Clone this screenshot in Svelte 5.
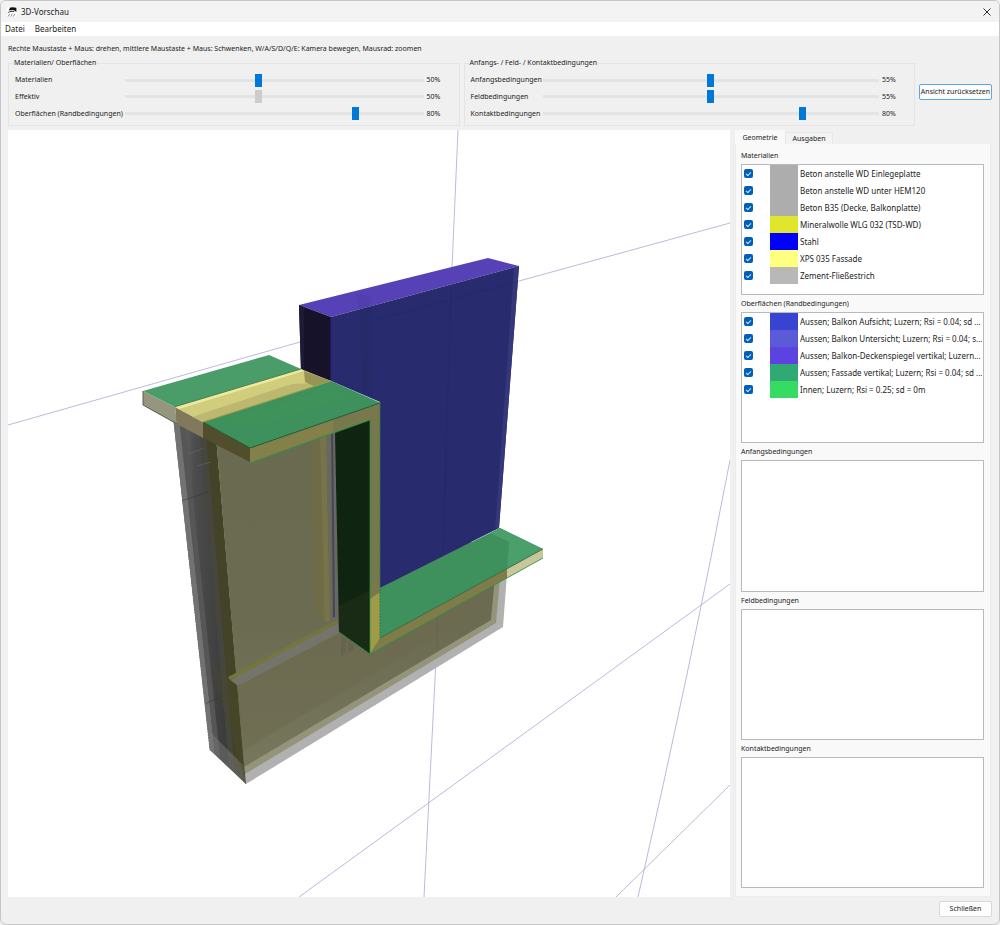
<script lang="ts">
    type Slider = { label: string; value: number; disabled?: boolean }
    type Item = { label: string; color: string; checked: boolean }

    let surfaceSliders: Slider[] = $state([
        { label: "Materialien", value: 50 },
        { label: "Effektiv", value: 50, disabled: true },
        { label: "Oberflächen (Randbedingungen)", value: 80 },
    ])

    let conditionSliders: Slider[] = $state([
        { label: "Anfangsbedingungen", value: 55 },
        { label: "Feldbedingungen", value: 55 },
        { label: "Kontaktbedingungen", value: 80 },
    ])

    let lists: { title: string; items: Item[] }[] = $state([
        {
            title: "Materialien",
            items: [
                { label: "Beton anstelle WD Einlegeplatte", color: "#adadad", checked: true },
                { label: "Beton anstelle WD unter HEM120", color: "#adadad", checked: true },
                { label: "Beton B35 (Decke, Balkonplatte)", color: "#adadad", checked: true },
                { label: "Mineralwolle WLG 032 (TSD-WD)", color: "#dfe62b", checked: true },
                { label: "Stahl", color: "#0000ff", checked: true },
                { label: "XPS 035 Fassade", color: "#ffff80", checked: true },
                { label: "Zement-Fließestrich", color: "#b8b8b8", checked: true },
            ],
        },
        {
            title: "Oberflächen (Randbedingungen)",
            items: [
                { label: "Aussen; Balkon Aufsicht; Luzern; Rsi = 0.04; sd ...", color: "#3644d1", checked: true },
                { label: "Aussen; Balkon Untersicht; Luzern; Rsi = 0.04; s...", color: "#5b5bd9", checked: true },
                { label: "Aussen; Balkon-Deckenspiegel vertikal; Luzern...", color: "#5d42e2", checked: true },
                { label: "Aussen; Fassade vertikal; Luzern; Rsi = 0.04; sd ...", color: "#31a972", checked: true },
                { label: "Innen; Luzern; Rsi = 0.25; sd = 0m", color: "#36db64", checked: true },
            ],
        },
        { title: "Anfangsbedingungen", items: [] },
        { title: "Feldbedingungen", items: [] },
        { title: "Kontaktbedingungen", items: [] },
    ])

    let tab = $state("Geometrie")

    function resetView() {
        surfaceSliders[0].value = 50
        surfaceSliders[2].value = 80
        conditionSliders[0].value = 55
        conditionSliders[1].value = 55
        conditionSliders[2].value = 80
    }
</script>

{#snippet sliderGroup(title: string, sliders: Slider[], wide: boolean)}
    <fieldset class="group">
        <legend>{title}</legend>
        <div class="sliders" class:wide>
            {#each sliders as slider}
                <label>
                    <span>{slider.label}</span>
                    <input type="range" min="10" max="100" bind:value={slider.value} disabled={slider.disabled} />
                    <span>{slider.value}%</span>
                </label>
            {/each}
        </div>
    </fieldset>
{/snippet}

<div class="window">
    <header class="titlebar">
        <svg class="app-icon" viewBox="0 0 10 10" aria-hidden="true">
            <rect width="10" height="10" fill="#fff" />
            <path d="M1.6 3.6 3.2.6Q6-.3 9.4.8V5Q7.6 2.9 5 3 3 3 1.6 3.6Z" fill="#111" />
            <path d="M.2 6.6Q1.4 4.2 4 3.8 6 3.6 8 4.6L6.5 5Q3 4.4.2 6.6Z" fill="#333" />
            <path d="M1 9.6l1.8-2.8M3.6 9.6l1.8-2.8M6.2 9.6 8 6.8" fill="none" stroke="#555" stroke-width=".7" />
        </svg>
        <h1>3D-Vorschau</h1>
        <button class="close" aria-label="Fenster schließen">
            <svg viewBox="0 0 8 8"><path d="M.5.5l7 7M7.5.5l-7 7" fill="none" stroke="#333" /></svg>
        </button>
    </header>

    <nav class="menu">
        <button>Datei</button>
        <button>Bearbeiten</button>
    </nav>

    <p class="hint">
        Rechte Maustaste + Maus: drehen, mittlere Maustaste + Maus: Schwenken, W/A/S/D/Q/E: Kamera bewegen, Mausrad: zoomen
    </p>

    <div class="controls">
        {@render sliderGroup("Materialien/ Oberflächen", surfaceSliders, true)}
        {@render sliderGroup("Anfangs- / Feld- / Kontaktbedingungen", conditionSliders, false)}
        <button class="btn reset" onclick={resetView}>Ansicht zurücksetzen</button>
    </div>

    <main>
        <div class="viewport">
            <svg viewBox="8 130 722 767" preserveAspectRatio="xMidYMid slice" role="img" aria-label="3D-Modell">
                <defs>
                    <linearGradient id="side" x1="0" x2="1" y1="0" y2="0">
                        <stop offset="0" stop-color="#777" />
                        <stop offset=".3" stop-color="#4c4c4c" />
                        <stop offset=".7" stop-color="#3c3c3c" />
                        <stop offset="1" stop-color="#444438" />
                    </linearGradient>
                    <linearGradient id="front" x1="0" x2="0" y1="0" y2="1">
                        <stop offset="0" stop-color="#6a6a50" />
                        <stop offset=".6" stop-color="#6b6b51" />
                        <stop offset="1" stop-color="#76775c" />
                    </linearGradient>
                    <linearGradient id="column" x1="0" x2="1" y1="0" y2="0">
                        <stop offset="0" stop-color="#6b6b4e" />
                        <stop offset=".6" stop-color="#6d6c45" />
                        <stop offset="1" stop-color="#77744c" />
                    </linearGradient>
                </defs>

                <!-- ground grid -->
                <g stroke="#a9a8d0" stroke-width=".8" fill="none">
                    <path d="M458 130 452 268M438 620 424 897" />
                    <path d="M8 425 300 342M519 281 730 223" />
                    <path d="M730 460Q690 670 638 897" />
                    <path d="M299 897 730 584M616 897 730 785" />
                </g>

                <!-- wall, left side -->
                <path d="M173 416 210 750 246 784 217 436Z" fill="url(#side)" />
                <path d="M173 416 210 750 215 754 179 416Z" fill="#727272" />
                <path d="M179 418 215 754 220 758 185 420Z" fill="#565656" />
                <path d="M199 428 229 766 235 772 206 432Z" fill="#46463e" />
                <path d="M206 432 235 772 246 784 217 436Z" fill="#434328" />
                <path d="M210 750 246 784 243 765 208 730Z" fill="#777" opacity=".5" />
                <path d="M182 501l26-9M205 704l17-8" stroke="#333" opacity=".5" />
                <path d="M188 454l16-6M197 466l14-4" stroke="#777" opacity=".4" />

                <!-- wall, front side -->
                <path d="M216 436 246 784 503 627 508 560 380 500V405Z" fill="#b1b1b2" />
                <path d="M216 436 245 774 496 623 502 556 380 500V410Z" fill="#93947a" />
                <path d="M216 436 244 767 491 620 497 556 380 500V410Z" fill="url(#front)" />
                <path d="M238 686 244 750 482 610 486 565 340 628Z" fill="#6c6b50" opacity=".6" />
                <path d="M308 430 314 610 326 622 330 620 325 430Z" fill="url(#column)" />
                <path d="M320 430 325 622 329 620 326 430Z" fill="#77744c" />
                <path d="M328 425 332 622 338 619 335 425Z" fill="#67676b" />
                <path d="M332 425 334 617" stroke="#47474d" stroke-width="2" />
                <path d="M228 677 337 620V623L230 680Z" fill="#757637" />
                <path d="M230 680 338 623 339 633 238 686Z" fill="#74746a" />
                <path d="M341 636V656L346 653V638M348 640V653L354 650V644" fill="#5f5e50" opacity=".5" />
                <path d="M210 663 227 677 238 686 246 784Z" fill="#4c4b2c" opacity=".3" />
                <path d="M437 608V650" stroke="#626260" opacity=".6" />

                <!-- balcony slab -->
                <path d="M299 305 488 258 519 266 331 317Z" fill="#5641b6" />
                <path d="M357 294 371 297 371 305 359 309Z" fill="#4b3ba1" opacity=".4" />
                <path d="M299 305 331 317V381L301 371Z" fill="#15122a" />
                <path d="M299 305 304 307V372L301 371Z" fill="#1d1b33" />
                <path d="M331 317 519 266 499 528 380 588V402L331 381Z" fill="#282b6d" />
                <path d="M360 309 371 306 372 398 362 393Z" fill="#252961" opacity=".25" />
                <path d="M514 268 519 266 499 528 495 530Z" fill="#34377a" />
                <path d="M331 317V381" stroke="#33218b" />
                <path d="M373 321 519 281M451 290 443 550" stroke="#222456" opacity=".25" />

                <!-- facade, upper part -->
                <path d="M143 391 143 405 177 424 175 407Z" fill="#96967f" />
                <path d="M175 407 203 422 203 438 177 424Z" fill="#82795c" />
                <path d="M203 422 252 449V463L203 438Z" fill="#504e2d" />
                <path d="M143 391 269 355 301 369 175 407Z" fill="#4a9c69" />
                <path d="M175 407 301 369 331 381 203 422Z" fill="#d0cd7d" />
                <path d="M175 407 301 369 304 371 179 409Z" fill="#efe99f" />
                <path d="M192 417 292 384 316 383 331 381 203 422Z" fill="#b8b16f" opacity=".8" />
                <path d="M304 371 331 381 314 386 305 382Z" fill="#989457" />
                <path d="M174 407 301 369" stroke="#49834f" />

                <!-- inner frame -->
                <path d="M335 432 370 420V654L339 632Z" fill="#0f2411" />
                <path d="M339 606 370 590V654L339 632Z" fill="#192b14" />
                <path d="M250 447 380 403V639L370 654V420L250 463Z" fill="#78784d" />
                <path d="M250 447 333 419V432L250 463Z" fill="#83804a" />
                <path d="M370 599 380 592V639L370 654Z" fill="#a09b48" />
                <path d="M203 422 331 381 381 403 250 448Z" fill="#3e915c" />
                <path d="M215 422 323 391 355 395 262 425Z" fill="#439456" opacity=".35" />
                <path d="M203 422 250 448 380 403" fill="none" stroke="#285b34" />
                <path d="M380 588 500 528 543 549 380 638Z" fill="#3e915c" />
                <path d="M490 533 500 528 543 549 507 568 509 542Z" fill="#4a9f6b" />
                <path d="M370 654 380 638 543 549V558Z" fill="#807c49" />
                <path d="M507 569 543 549V558L507 578Z" fill="#c9c69b" />
                <path d="M203 422 331 381" stroke="#9a9d3e" />
                <path d="M250 463 370 420V654L543 558M339 632 370 654" fill="none" stroke="#249548" stroke-width=".8" />
                <path d="M380 403V638" stroke="#2a7d45" stroke-dasharray="2 1" />
                <path d="M380 638 543 549" stroke="#2e6d3e" stroke-width=".8" />
                <path d="M143 391V405L177 424" fill="none" stroke="#5c5c52" />
                <path d="M174 421 210 750" stroke="#6c7671" stroke-dasharray="2 1" />
            </svg>
        </div>

        <aside>
            <div class="tabs" role="tablist">
                {#each ["Geometrie", "Ausgaben"] as name}
                    <button role="tab" aria-selected={tab == name} class:active={tab == name} onclick={() => (tab = name)}>
                        {name}
                    </button>
                {/each}
            </div>
            <div class="pane">
                {#each lists as list}
                    <section>
                        <h2>{list.title}</h2>
                        <ul>
                            {#each list.items as item}
                                <li>
                                    <label>
                                        <input type="checkbox" bind:checked={item.checked} />
                                        <span class="swatch" style="background: {item.color}"></span>
                                        <span class="name">{item.label}</span>
                                    </label>
                                </li>
                            {/each}
                        </ul>
                    </section>
                {/each}
            </div>
        </aside>
    </main>

    <footer>
        <button class="btn">Schließen</button>
    </footer>
</div>

<style>
    :global(body) {
        margin: 0;
        background: #f0f0f0;
    }

    .window {
        box-sizing: border-box;
        display: flex;
        flex-direction: column;
        height: 100vh;
        min-height: 600px;
        border: 1px solid #c6c6c6;
        border-radius: 6px;
        overflow: hidden;
        background: #f0f0f0;
        color: #222;
        font-family: "Noto Sans", "Open Sans", sans-serif;
        font-size: 7px;
        line-height: 10px;
    }

    button {
        padding: 0;
        border: none;
        background: none;
        color: inherit;
        font: inherit;
    }

    h1,
    h2,
    p,
    ul {
        margin: 0;
        padding: 0;
        font-weight: 400;
    }

    .titlebar {
        display: flex;
        align-items: center;
        gap: 4px;
        height: 21px;
        padding: 0 8px 0 6px;
        background: #f3f3f3;
    }

    .app-icon {
        width: 10px;
        height: 10px;
    }

    h1 {
        flex-grow: 1;
        font-size: 8px;
    }

    .close svg {
        display: block;
        width: 8px;
        height: 8px;
    }

    .menu {
        display: flex;
        gap: 10px;
        height: 14px;
        padding: 0 4px;
        background: #fff;
        font-size: 8px;
    }

    .hint {
        padding: 8px 7px 4px;
    }

    .controls {
        display: flex;
        align-items: center;
        gap: 4px;
        padding: 0 7px 4px;
    }

    .group {
        flex: 1;
        min-width: 0;
        margin: 0;
        padding: 4px 0 3px 6px;
        border: 1px solid #e4e4e4;
    }

    legend {
        margin-left: -2px;
        padding: 0 1px;
    }

    .sliders {
        display: grid;
        grid-auto-rows: 1fr;
        height: 50px;
    }

    .sliders label {
        display: grid;
        grid-template-columns: 72px 1fr 35px;
        align-items: center;
        white-space: nowrap;
    }

    .sliders.wide label {
        grid-template-columns: 110px 1fr 35px;
    }

    .sliders span:last-child {
        padding-left: 3px;
    }

    input[type="range"] {
        appearance: none;
        width: 100%;
        height: 13px;
        margin: 0;
        background: transparent;
    }

    input[type="range"]::-webkit-slider-runnable-track {
        height: 3px;
        background: #e1e4e4;
    }

    input[type="range"]::-webkit-slider-thumb {
        appearance: none;
        width: 7px;
        height: 13px;
        margin-top: -5px;
        background: #0078d7;
    }

    input[type="range"]:disabled::-webkit-slider-thumb {
        background: #ccc;
    }

    .btn {
        box-sizing: border-box;
        width: 53px;
        height: 16px;
        border: 1px solid #d8d8d8;
        border-radius: 2px;
        background: #fdfdfd;
        white-space: nowrap;
    }

    .reset {
        width: 73px;
        border-color: #5ba7e5;
    }

    main {
        display: flex;
        flex: 1;
        gap: 5px;
        min-height: 0;
        padding: 0 8px 0 7px;
    }

    .viewport {
        flex: 1;
        min-width: 0;
        background: #fff;
    }

    .viewport svg {
        display: block;
        width: 100%;
        height: 100%;
    }

    aside {
        display: flex;
        flex-direction: column;
        width: 256px;
    }

    .tabs {
        display: flex;
        align-items: flex-end;
        height: 14px;
    }

    .tabs button {
        width: 48px;
        height: 12px;
        border: 1px solid #e8e8e8;
        border-bottom: none;
        background: #f3f3f3;
    }

    .tabs .active {
        width: 50px;
        height: 14px;
        border-color: #f9f9f9;
        background: #f9f9f9;
    }

    .pane {
        display: flex;
        flex: 1;
        flex-direction: column;
        gap: 4px;
        min-height: 0;
        padding: 7px 6px 8px 5px;
        border: 1px solid #ececec;
        border-top: none;
        background: #f9f9f9;
    }

    section {
        display: flex;
        flex: 1;
        flex-direction: column;
        gap: 3px;
        min-height: 0;
    }

    h2 {
        font-size: 7px;
    }

    ul {
        flex: 1;
        min-height: 0;
        border: 1px solid #b9babf;
        background: #fff;
        list-style: none;
        overflow: hidden;
    }

    li label {
        display: flex;
        align-items: center;
        height: 17px;
        padding-left: 2px;
        font-size: 8px;
    }

    input[type="checkbox"] {
        appearance: none;
        display: grid;
        flex: none;
        place-items: center;
        width: 9px;
        height: 9px;
        margin: 0 17px 0 0;
        border-radius: 2px;
        background: #fff;
        box-shadow: inset 0 0 0 1px #888;
    }

    input[type="checkbox"]:checked {
        background: #005fb8;
        box-shadow: none;
    }

    input[type="checkbox"]:checked::before {
        content: "";
        width: 4px;
        height: 2px;
        border: solid #cfe2f3;
        border-width: 0 0 1px 1px;
        transform: rotate(-45deg);
    }

    .swatch {
        flex: none;
        width: 28px;
        height: 100%;
        margin-right: 2px;
    }

    .name {
        white-space: nowrap;
    }

    footer {
        display: flex;
        justify-content: flex-end;
        padding: 4px 7px 7px;
    }
</style>
